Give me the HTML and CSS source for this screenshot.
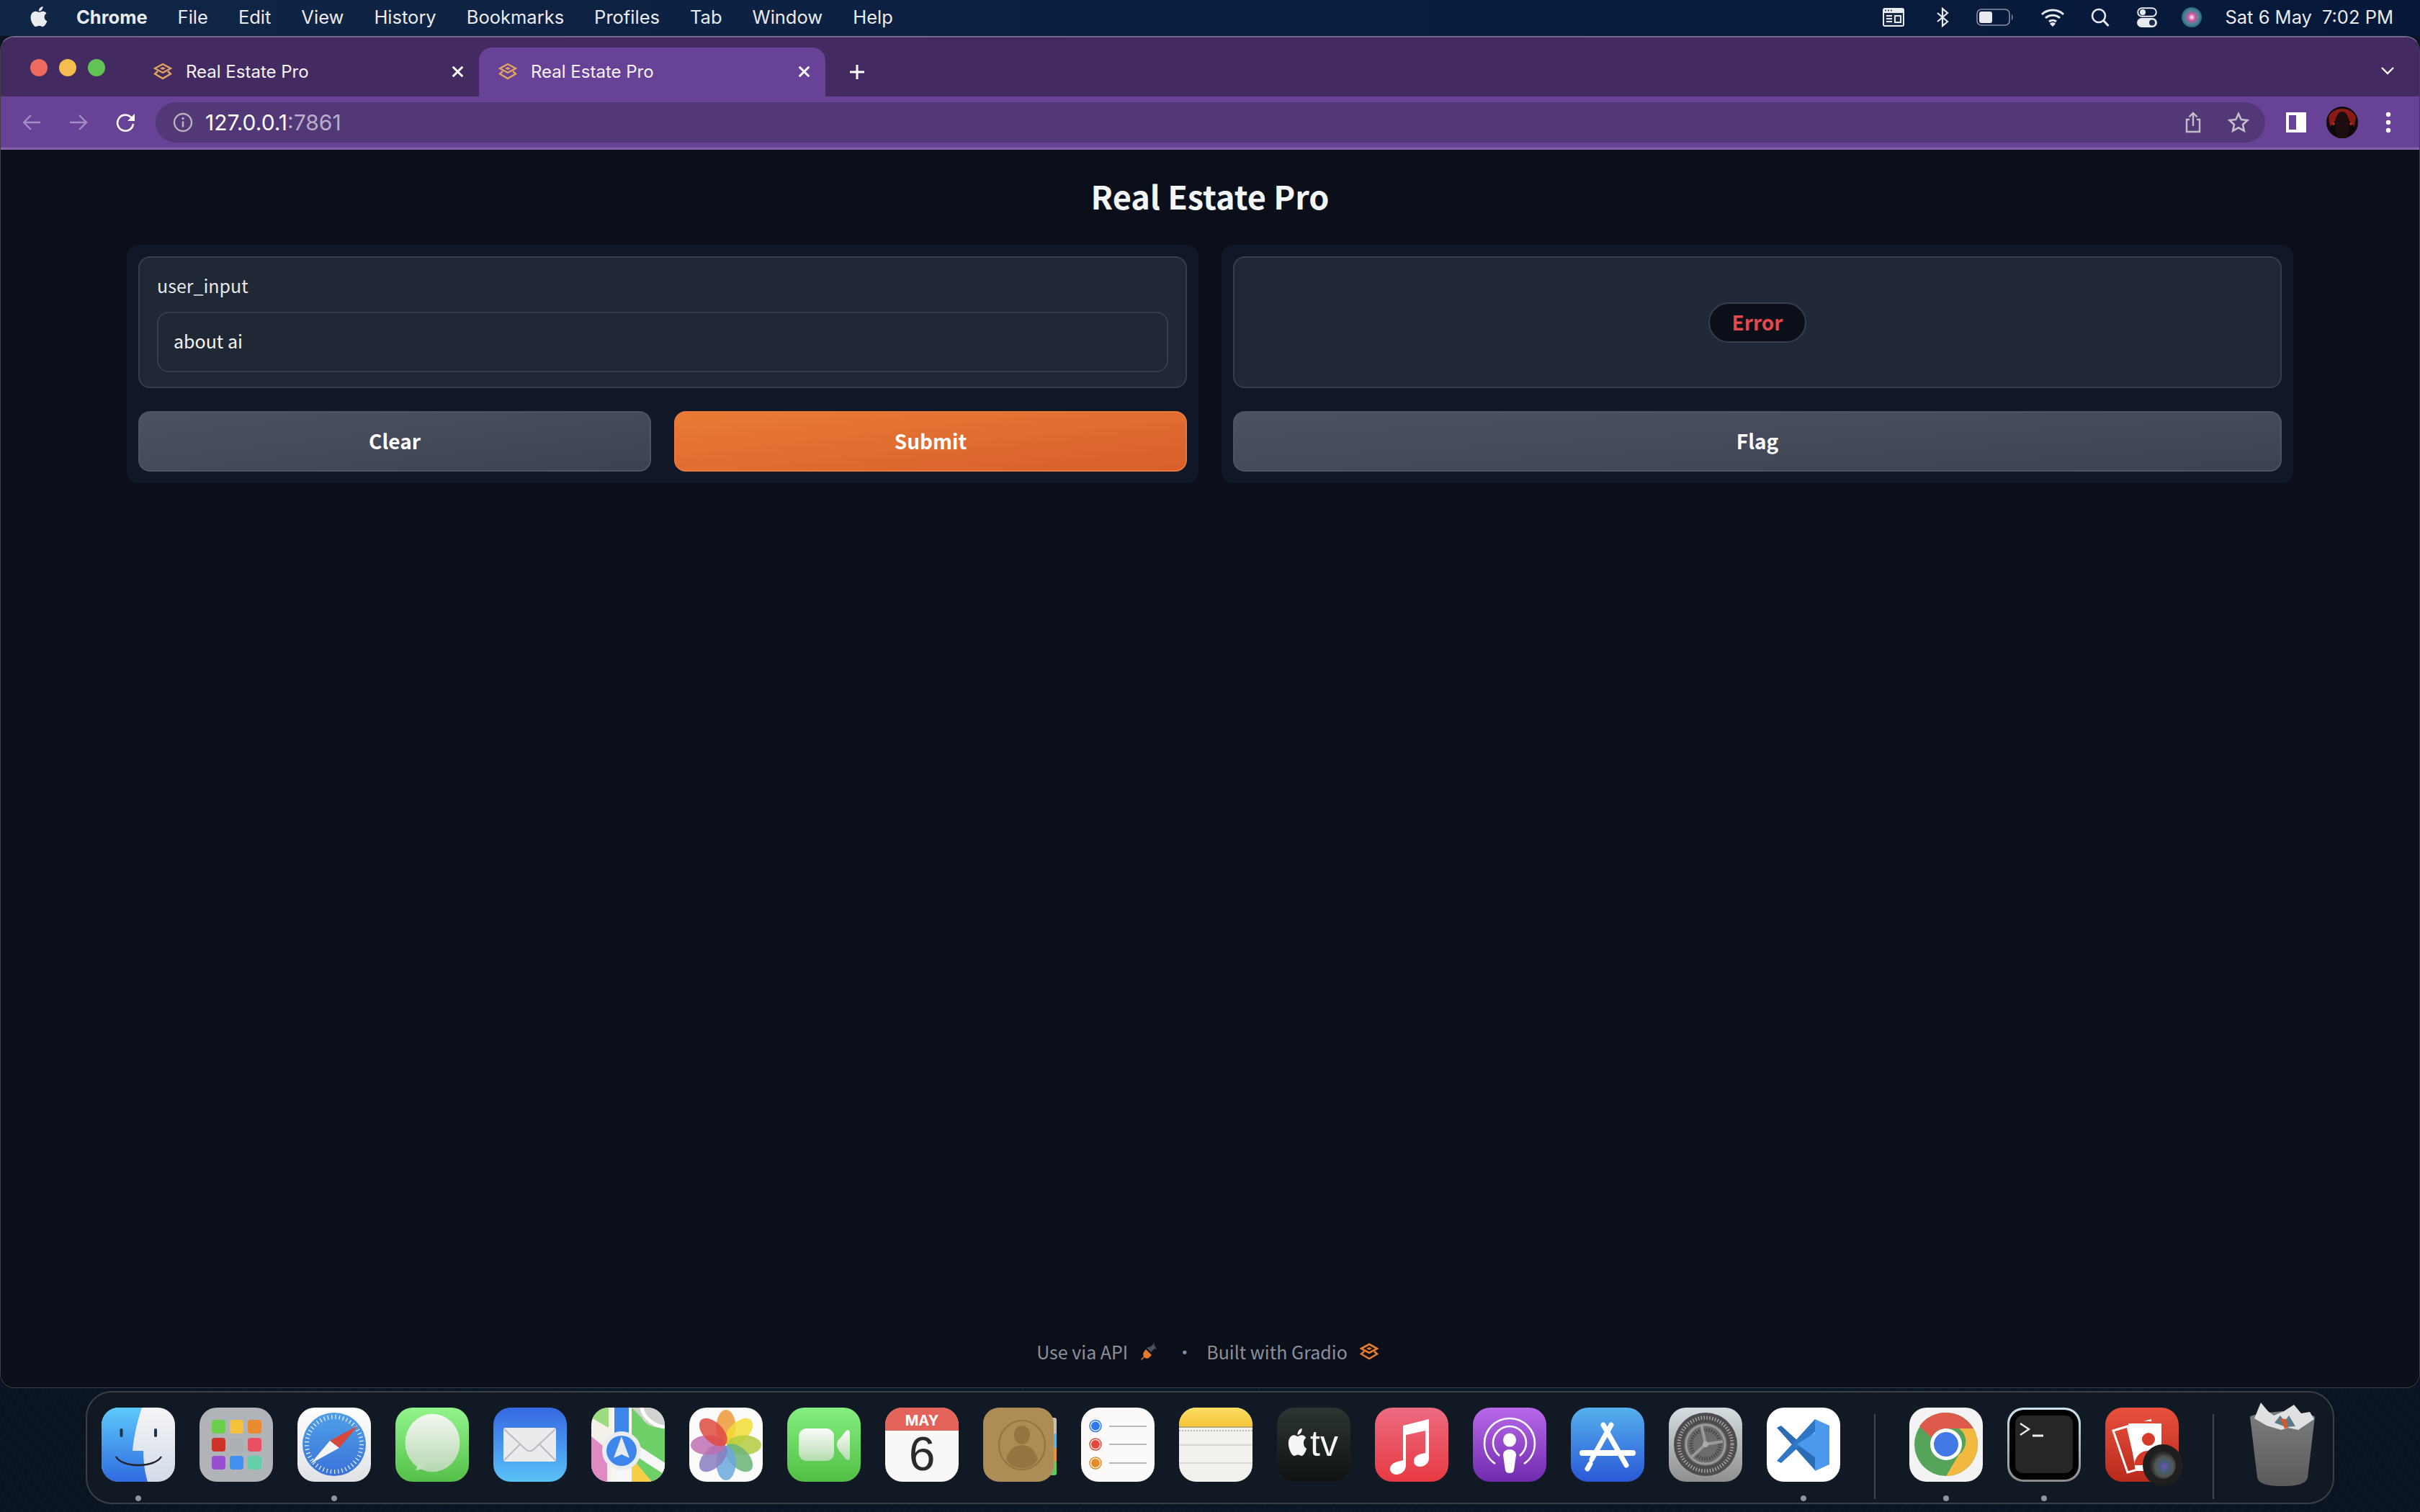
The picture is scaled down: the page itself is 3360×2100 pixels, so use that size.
FILE: index.html
```html
<!DOCTYPE html>
<html lang="en">
<head>
<meta charset="utf-8">
<title>Real Estate Pro</title>
<link rel="stylesheet" href="styles.css">
</head>
<body>
<header class="menubar">
  <svg class="apple" viewBox="0 0 24 24"><path d="M12.152 6.896c-.948 0-2.415-1.078-3.96-1.04-2.04.027-3.91 1.183-4.961 3.014-2.117 3.675-.546 9.103 1.519 12.09 1.013 1.454 2.208 3.09 3.792 3.039 1.52-.065 2.09-.987 3.935-.987 1.831 0 2.35.987 3.96.948 1.637-.026 2.676-1.48 3.676-2.948 1.156-1.688 1.636-3.325 1.662-3.415-.039-.013-3.182-1.221-3.22-4.857-.026-3.04 2.48-4.494 2.597-4.559-1.429-2.09-3.623-2.324-4.39-2.376-2-.156-3.675 1.09-4.61 1.09zM15.53 3.83c.843-1.012 1.4-2.427 1.245-3.83-1.207.052-2.662.805-3.532 1.818-.78.896-1.454 2.338-1.273 3.714 1.338.104 2.715-.688 3.559-1.701"/></svg>
  <nav class="menus">
    <span class="menu-app">Chrome</span><span>File</span><span>Edit</span><span>View</span><span>History</span><span>Bookmarks</span><span>Profiles</span><span>Tab</span><span>Window</span><span>Help</span>
  </nav>
  <div class="status">
    <svg class="st" width="30" height="26" viewBox="0 0 30 26"><rect x="0" y="0" width="30" height="26" rx="3" fill="#e8eaee"/><rect x="2" y="7" width="26" height="17" fill="#1a2a48"/><g fill="#1a2a48"><circle cx="4" cy="3.5" r="1"/><circle cx="8" cy="3.5" r="1"/><circle cx="12" cy="3.5" r="1"/></g><path d="M5 11h8M5 15h8M5 19h8" stroke="#e8eaee" stroke-width="2"/><path d="M17 11h8v9h-8z" fill="none" stroke="#e8eaee" stroke-width="2"/></svg>
    <svg class="st st-bt" width="18" height="28" viewBox="0 0 18 28"><path d="M2 8l14 12-7 6V2l7 6L2 20" fill="none" stroke="#e8eaee" stroke-width="2.2"/></svg>
    <svg class="st st-bat" width="52" height="24" viewBox="0 0 52 24"><rect x="1" y="1" width="45" height="22" rx="6" fill="none" stroke="#8b93a3" stroke-width="1.6"/><rect x="4" y="4" width="18" height="16" rx="3" fill="#e8eaee"/><path d="M49 8c2 1 2 7 0 8z" fill="#8b93a3"/></svg>
    <svg class="st st-wifi" width="34" height="26" viewBox="0 0 34 26"><path d="M2 9a22 22 0 0 1 30 0M7 14a15 15 0 0 1 20 0M12 19a8 8 0 0 1 10 0" fill="none" stroke="#e8eaee" stroke-width="3"/><path d="M17 26l-4-4a5 5 0 0 1 8 0z" fill="#e8eaee"/></svg>
    <svg class="st st-search" width="26" height="26" viewBox="0 0 26 26"><circle cx="11" cy="11" r="9" fill="none" stroke="#e8eaee" stroke-width="2.6"/><path d="M17.5 17.5l7 7.5" stroke="#e8eaee" stroke-width="3"/></svg>
    <svg class="st st-cc" width="28" height="28" viewBox="0 0 28 28"><rect x="1.2" y="1.2" width="25.6" height="11.6" rx="5.8" fill="none" stroke="#e8eaee" stroke-width="2"/><circle cx="8" cy="7" r="4" fill="#e8eaee"/><rect x="0" y="15" width="28" height="13" rx="6.5" fill="#e8eaee"/><circle cx="21" cy="21.500" r="4" fill="#1a2a48"/></svg>
    <svg class="st st-siri" width="28" height="28" viewBox="0 0 28 28"><defs><radialGradient id="siri" cx=".5" cy=".5" r=".6"><stop offset="0" stop-color="#f2f4f6"/><stop offset=".3" stop-color="#d0529a"/><stop offset=".6" stop-color="#3e8a9a"/><stop offset="1" stop-color="#30406a"/></radialGradient></defs><circle cx="14" cy="14" r="14" fill="url(#siri)"/></svg>
    <span class="clock"><span>Sat 6 May</span><span>7:02 PM</span></span>
  </div>
</header>

<div class="window">
  <div class="tabstrip">
    <div class="lights"><i class="light red"></i><i class="light yellow"></i><i class="light green"></i></div>
    <div class="tab">
      <svg class="favicon" viewBox="0 0 26 24"><path d="M13 2l11 6-11 6L2 8zM6 12l-4 3.500L13 22l11-6.500L20 12" fill="none" stroke="#e3a45d" stroke-width="2.400"/><path d="M13 6l4 2-4 2-4-2z" fill="#e3a45d"/></svg>
      <span class="tab-title">Real Estate Pro</span>
      <svg class="tab-x" viewBox="0 0 14 14"><path d="M2 2l10 10M12 2L2 12" stroke="#fff" stroke-width="2.2"/></svg>
    </div>
    <div class="tab tab-active">
      <svg class="favicon" viewBox="0 0 26 24"><path d="M13 2l11 6-11 6L2 8zM6 12l-4 3.500L13 22l11-6.500L20 12" fill="none" stroke="#e3a45d" stroke-width="2.400"/><path d="M13 6l4 2-4 2-4-2z" fill="#e3a45d"/></svg>
      <span class="tab-title">Real Estate Pro</span>
      <svg class="tab-x" viewBox="0 0 14 14"><path d="M2 2l10 10M12 2L2 12" stroke="#fff" stroke-width="2.2"/></svg>
    </div>
    <svg class="newtab" viewBox="0 0 24 24"><path d="M12 2v20M2 12h20" stroke="#fff" stroke-width="3"/></svg>
    <svg class="tabmenu" viewBox="0 0 20 12"><path d="M2 2l8 8 8-8" fill="none" stroke="#fff" stroke-width="2.4"/></svg>
  </div>
  <div class="toolbar">
    <svg class="nav" viewBox="0 0 28 28"><path d="M26 14H3M13 4L3 14l10 10" fill="none" stroke="#a68cc4" stroke-width="2.400"/></svg>
    <svg class="nav" viewBox="0 0 28 28"><path d="M2 14h23M15 4l10 10-10 10" fill="none" stroke="#a68cc4" stroke-width="2.400"/></svg>
    <svg class="nav" viewBox="0 0 28 28"><path d="M23.500 9A11 11 0 1 0 25 16" fill="none" stroke="#fff" stroke-width="2.600"/><path d="M27 2v10H17z" fill="#fff"/></svg>
    <div class="omnibox">
      <svg class="info" viewBox="0 0 28 28"><circle cx="14" cy="14" r="12" fill="none" stroke="#b7b3bd" stroke-width="2.400"/><path d="M14 12.500v8" stroke="#b7b3bd" stroke-width="2.600"/><circle cx="14" cy="8.500" r="1.700" fill="#b7b3bd"/></svg>
      <span class="url">127.0.0.1<span class="url-port">:7861</span></span>
      <svg class="share" viewBox="0 0 24 30"><path d="M7 11H3v17h18V11h-4M12 20V2M6.500 7.500L12 2l5.500 5.500" fill="none" stroke="#c3bfc9" stroke-width="2.400"/></svg>
      <svg class="star" viewBox="0 0 30 30"><path d="M15 3l3.700 8 8.800 1-6.500 6 1.800 8.700L15 22.300l-7.800 4.400L9 18l-6.500-6 8.800-1z" fill="none" stroke="#c3bfc9" stroke-width="2.600"/></svg>
    </div>
    <div class="sidepanel"></div>
    <svg class="avatar" viewBox="0 0 44 44"><circle cx="22" cy="22" r="22" fill="#0c0a0c"/><path d="M3 14C8 5 16 3 22 3s14 2 19 11l-2 14-7-8-3-8h-14l-3 8-7 8z" fill="#8c1a14"/><path d="M15 14a7 7 0 0 1 14 0l3 16-4 14H16l-4-14z" fill="#1d0d0f"/><circle cx="10" cy="24" r="2" fill="#b02a1e"/><circle cx="34" cy="24" r="2" fill="#b02a1e"/></svg>
    <svg class="kebab" viewBox="0 0 8 30"><circle cx="4" cy="4" r="3.200" fill="#fff"/><circle cx="4" cy="15" r="3.200" fill="#fff"/><circle cx="4" cy="26" r="3.200" fill="#fff"/></svg>
  </div>
  <main class="page">
    <h1 class="title">Real Estate Pro</h1>
    <div class="columns">
      <section class="panel">
        <div class="block block-input">
          <label class="label">user_input</label>
          <div class="textbox">about ai</div>
        </div>
        <div class="btn-row">
          <button class="btn btn-secondary">Clear</button>
          <button class="btn btn-primary">Submit</button>
        </div>
      </section>
      <section class="panel">
        <div class="block block-output"><span class="error-pill">Error</span></div>
        <div class="btn-row">
          <button class="btn btn-secondary">Flag</button>
        </div>
      </section>
    </div>
    <footer class="footer">
      <span>Use via API</span>
      <svg class="plug" viewBox="0 0 24 24"><path d="M14 5l3-3 1-2 1 1-1 2 3 3-1 1 2 1-1 1-2-1-5 5-6-6z" fill="#4a505e"/><path d="M7 9l8 8-4 4c-2 1-5 1-6-1l-4 4-1-1 4-4c-1-2-1-4 0-6z" fill="#e77b2d"/></svg>
      <span class="sep">·</span>
      <span>Built with Gradio</span>
      <svg class="gradio" viewBox="0 0 26 24"><path d="M13 2l11 6-11 6L2 8zM6 12l-4 3.500L13 22l11-6.500L20 12" fill="none" stroke="#e77b2d" stroke-width="2.600"/><path d="M13 6l4 2-4 2-4-2z" fill="#e77b2d"/></svg>
    </footer>
  </main>
</div>

<div class="dock-wrap">
<div class="dock">
  <!-- Finder -->
  <div class="app dot"><svg viewBox="0 0 102 103"><defs><linearGradient id="f1" x1="0" y1="0" x2="0" y2="1"><stop offset="0" stop-color="#5cc9fb"/><stop offset="1" stop-color="#2f6be0"/></linearGradient><linearGradient id="f2" x1="0" y1="0" x2="0" y2="1"><stop offset="0" stop-color="#f4f4f6"/><stop offset="1" stop-color="#d2dbe8"/></linearGradient></defs><rect width="102" height="103" rx="24" fill="url(#f2)"/><path d="M24 0h32C50 18 45 38 43 60h15c0 16 2 30 6 43H24A24 24 0 0 1 0 79V24A24 24 0 0 1 24 0z" fill="url(#f1)"/><rect x="25.500" y="29" width="4" height="12" rx="2" fill="#20304a"/><rect x="73" y="29" width="4" height="12" rx="2" fill="#20304a"/><path d="M20 68c8 16 54 16 63 0" fill="none" stroke="#22252c" stroke-width="2.500"/></svg></div>
  <!-- Launchpad -->
  <div class="app"><svg viewBox="0 0 102 103"><rect width="102" height="103" rx="24" fill="#b0b3b7"/><rect x="17" y="17" width="19" height="19" rx="4" fill="#6bd14d"/><rect x="42" y="17" width="19" height="19" rx="4" fill="#f5c13a"/><rect x="67" y="17" width="19" height="19" rx="4" fill="#e78b2e"/><rect x="17" y="42" width="19" height="19" rx="4" fill="#cb3527"/><rect x="42" y="42" width="19" height="19" rx="4" fill="#a9afb3"/><rect x="67" y="42" width="19" height="19" rx="4" fill="#ea5064"/><rect x="17" y="67" width="19" height="19" rx="4" fill="#994fd1"/><rect x="42" y="67" width="19" height="19" rx="4" fill="#3f92f0"/><rect x="67" y="67" width="19" height="19" rx="4" fill="#62cfa9"/></svg></div>
  <!-- Safari -->
  <div class="app dot"><svg viewBox="0 0 102 103"><defs><linearGradient id="s1" x1="0" y1="0" x2="0" y2="1"><stop offset="0" stop-color="#fff"/><stop offset="1" stop-color="#e1e2e5"/></linearGradient><linearGradient id="s2" x1="0" y1="0" x2="0" y2="1"><stop offset="0" stop-color="#4fa0e8"/><stop offset="1" stop-color="#3a72d8"/></linearGradient></defs><rect width="102" height="103" rx="24" fill="url(#s1)"/><circle cx="51" cy="51" r="44" fill="url(#s2)"/><circle cx="51" cy="51" r="38" fill="none" stroke="#e6f0fb" stroke-width="6" stroke-dasharray="1.300 4.000"/><path d="M84 25L58 56 45 46z" fill="#d9473a"/><path d="M18 78l27-32 13 10z" fill="#f4f4f4"/></svg></div>
  <!-- Messages -->
  <div class="app"><svg viewBox="0 0 102 103"><defs><linearGradient id="m1" x1="0" y1="0" x2="0" y2="1"><stop offset="0" stop-color="#92f58c"/><stop offset="1" stop-color="#55c049"/></linearGradient><linearGradient id="m2" x1="0" y1="0" x2="0" y2="1"><stop offset="0" stop-color="#f3f8f1"/><stop offset="1" stop-color="#b5d7b0"/></linearGradient></defs><rect width="102" height="103" rx="24" fill="url(#m1)"/><ellipse cx="51.500" cy="49" rx="38" ry="31" fill="url(#m2)" transform="translate(0 -14.700) scale(1 1.300)"/><path d="M32 74c0 6-2 10-4 13 5 0 12-3 16-8z" fill="#c4dfc0"/></svg></div>
  <!-- Mail -->
  <div class="app"><svg viewBox="0 0 102 103"><defs><linearGradient id="ma" x1="0" y1="0" x2="0" y2="1"><stop offset="0" stop-color="#3568e2"/><stop offset="1" stop-color="#5ac2f7"/></linearGradient></defs><rect width="102" height="103" rx="24" fill="url(#ma)"/><rect x="14" y="28" width="73" height="47" rx="3" fill="#ebebed"/><path d="M15 30l30 28c3 3 8 3 11 0l30-28M15 73l22-22M86 73L64 51" fill="none" stroke="#b9bcc2" stroke-width="2"/></svg></div>
  <!-- Maps -->
  <div class="app"><svg viewBox="0 0 102 103"><defs><clipPath id="mp"><rect width="102" height="103" rx="24"/></clipPath></defs><g clip-path="url(#mp)"><rect width="102" height="103" fill="#f4f1ea"/><path d="M0 0h24v28L0 14z" fill="#9ddc7e"/><path d="M0 40l22 18v45H0z" fill="#e08ac2"/><path d="M56 0h46v103H84L56 70z" fill="#6fd06a"/><path d="M56 0h46v26c-10 4-26 0-32-12z" fill="#d2d2d0"/><path d="M70 0c2 14 18 26 32 27" fill="none" stroke="#fff" stroke-width="5"/><path d="M56 70l28 33h-28z" fill="#f6cf46"/><rect x="28" y="0" width="28" height="103" fill="#f6f6f6"/><rect x="32" y="0" width="20" height="60" fill="#3f86ec"/><path d="M56 55l46 30" stroke="#f6f6f6" stroke-width="14"/><circle cx="42" cy="60" r="27" fill="#e9edf2"/><circle cx="42" cy="60" r="21" fill="#3e86ec"/><path d="M42 40l11 30-11-5-11 5z" fill="#e7ecf2"/></g></svg></div>
  <!-- Photos -->
  <div class="app"><svg viewBox="0 0 102 103"><rect width="102" height="103" rx="24" fill="#fbfbfb"/><g transform="translate(51 52)"><ellipse cx="0" cy="-25" rx="13.500" ry="24" fill="#ec9a38" opacity=".85"/><ellipse cx="0" cy="-25" rx="13.500" ry="24" fill="#f2dd38" opacity=".85" transform="rotate(45)"/><ellipse cx="0" cy="-25" rx="13.500" ry="24" fill="#b3cb40" opacity=".85" transform="rotate(90)"/><ellipse cx="0" cy="-25" rx="13.500" ry="24" fill="#69b478" opacity=".85" transform="rotate(135)"/><ellipse cx="0" cy="-25" rx="13.500" ry="24" fill="#6aa7dc" opacity=".85" transform="rotate(180)"/><ellipse cx="0" cy="-25" rx="13.500" ry="24" fill="#8a7cc0" opacity=".85" transform="rotate(225)"/><ellipse cx="0" cy="-25" rx="13.500" ry="24" fill="#be6fb0" opacity=".85" transform="rotate(270)"/><ellipse cx="0" cy="-25" rx="13.500" ry="24" fill="#df4a3e" opacity=".85" transform="rotate(315)"/></g></svg></div>
  <!-- FaceTime -->
  <div class="app"><svg viewBox="0 0 102 103"><defs><linearGradient id="ft" x1="0" y1="0" x2="0" y2="1"><stop offset="0" stop-color="#85ee80"/><stop offset="1" stop-color="#51bf44"/></linearGradient><linearGradient id="ft2" x1="0" y1="0" x2="0" y2="1"><stop offset="0" stop-color="#fbfdfa"/><stop offset="1" stop-color="#b5dcb0"/></linearGradient></defs><rect width="102" height="103" rx="24" fill="url(#ft)"/><rect x="16" y="29" width="49" height="45" rx="11" fill="url(#ft2)"/><path d="M69 51c0-4 2-6 4-8l8-10c3-3 6-2 6 2v34c0 4-3 5-6 2l-8-10c-2-3-4-5-4-10z" fill="url(#ft2)"/></svg></div>
  <!-- Calendar -->
  <div class="app"><svg viewBox="0 0 102 103"><defs><clipPath id="cal"><rect width="102" height="103" rx="24"/></clipPath></defs><g clip-path="url(#cal)"><rect width="102" height="103" fill="#f9f8f6"/><rect width="102" height="32" fill="#e3635a"/></g><text x="51" y="25" class="cal-month" text-anchor="middle">MAY</text><text x="51" y="87" class="cal-day" text-anchor="middle">6</text></svg></div>
  <!-- Contacts -->
  <div class="app"><svg viewBox="0 0 102 103"><rect x="92" y="14" width="10" height="25" rx="3" fill="#c4c1bc"/><rect x="92" y="36" width="10" height="22" fill="#5fb3e8"/><rect x="92" y="56" width="10" height="20" fill="#ea9330"/><rect x="92" y="74" width="10" height="20" rx="3" fill="#62c860"/><rect x="0" y="0" width="98" height="103" rx="22" fill="#ad8c55"/><ellipse cx="54" cy="52" rx="32" ry="34" fill="none" stroke="#95743f" stroke-width="2.200"/><ellipse cx="54" cy="38" rx="11" ry="13" fill="#95743f"/><path d="M32 72c3-14 13-20 22-20s19 6 22 20c-6 9-14 12-22 12s-16-3-22-12z" fill="#95743f"/></svg></div>
  <!-- Reminders -->
  <div class="app"><svg viewBox="0 0 102 103"><rect width="102" height="103" rx="24" fill="#fbfaf9"/><g fill="none" stroke-width="1.500"><circle cx="20" cy="25.500" r="8" stroke="#2f77ec"/><circle cx="20" cy="51" r="8" stroke="#e4483a"/><circle cx="20" cy="77" r="8" stroke="#e98a24"/></g><circle cx="20" cy="25.500" r="6" fill="#2f77ec"/><circle cx="20" cy="51" r="6" fill="#e4483a"/><circle cx="20" cy="77" r="6" fill="#e98a24"/><path d="M39 26h52M39 51h52M39 77h52" stroke="#b9b9b9" stroke-width="2"/></svg></div>
  <!-- Notes -->
  <div class="app"><svg viewBox="0 0 102 103"><defs><clipPath id="nt"><rect width="102" height="103" rx="24"/></clipPath><linearGradient id="nt2" x1="0" y1="0" x2="0" y2="1"><stop offset="0" stop-color="#fbdd63"/><stop offset="1" stop-color="#f6c437"/></linearGradient></defs><g clip-path="url(#nt)"><rect width="102" height="103" fill="#f3f1ec"/><rect width="102" height="26" fill="url(#nt2)"/><rect y="26" width="102" height="2" fill="#b9a772"/><path d="M0 32h102" stroke="#b7b5b0" stroke-width="2" stroke-dasharray="2 2"/><path d="M0 52h102M0 77h102" stroke="#d8d6d1" stroke-width="2"/></g></svg></div>
  <!-- TV -->
  <div class="app"><svg viewBox="0 0 102 103"><defs><linearGradient id="tv" x1="0" y1="0" x2="0" y2="1"><stop offset="0" stop-color="#2c3530"/><stop offset="1" stop-color="#0f1313"/></linearGradient></defs><rect width="102" height="103" rx="24" fill="url(#tv)"/><svg x="13" y="29" width="31" height="38" viewBox="0 0 24 24" preserveAspectRatio="none"><path fill="#f5f5f5" d="M12.152 6.896c-.948 0-2.415-1.078-3.96-1.04-2.04.027-3.91 1.183-4.961 3.014-2.117 3.675-.546 9.103 1.519 12.09 1.013 1.454 2.208 3.09 3.792 3.039 1.52-.065 2.09-.987 3.935-.987 1.831 0 2.35.987 3.96.948 1.637-.026 2.676-1.48 3.676-2.948 1.156-1.688 1.636-3.325 1.662-3.415-.039-.013-3.182-1.221-3.22-4.857-.026-3.04 2.48-4.494 2.597-4.559-1.429-2.09-3.623-2.324-4.39-2.376-2-.156-3.675 1.09-4.61 1.09zM15.530 3.830c.843-1.012 1.400-2.427 1.245-3.830-1.207.052-2.662.805-3.532 1.818-.780.896-1.454 2.338-1.273 3.714 1.338.104 2.715-.688 3.559-1.701"/></svg><text x="46" y="67" class="tv-text">tv</text></svg></div>
  <!-- Music -->
  <div class="app"><svg viewBox="0 0 102 103"><defs><linearGradient id="mu" x1="0" y1="0" x2="0" y2="1"><stop offset="0" stop-color="#ec6b80"/><stop offset="1" stop-color="#e73a42"/></linearGradient></defs><rect width="102" height="103" rx="24" fill="url(#mu)"/><path d="M39 25l36-9v54c0 8-7 12-12 12-6 0-9-3-9-8 0-6 6-9 11-10l5-1V32l-27 6v42c0 8-7 13-13 13-6 0-9-4-9-8 0-6 6-9 11-10l7-2z" fill="#fff"/></svg></div>
  <!-- Podcasts -->
  <div class="app"><svg viewBox="0 0 102 103"><defs><linearGradient id="po" x1="0" y1="0" x2="0" y2="1"><stop offset="0" stop-color="#b968ea"/><stop offset="1" stop-color="#6f2bae"/></linearGradient></defs><rect width="102" height="103" rx="24" fill="url(#po)"/><path d="M31 78C19 70 16 58 16 50c0-20 16-35 35-35s35 15 35 35c0 8-3 20-15 28" fill="none" stroke="#fff" stroke-width="2.600"/><path d="M37 67c-6-5-9-11-9-18 0-12 10-23 23-23s23 11 23 23c0 7-3 13-9 18" fill="none" stroke="#fff" stroke-width="2.600"/><ellipse cx="51" cy="45" rx="9" ry="9.500" fill="#fff"/><path d="M42 66c0-5 4-8 9-8s9 3 9 8l-3 21c-1 3-3 4-6 4s-5-1-6-4z" fill="#fff"/></svg></div>
  <!-- App Store -->
  <div class="app"><svg viewBox="0 0 102 103"><defs><linearGradient id="as" x1="0" y1="0" x2="0" y2="1"><stop offset="0" stop-color="#55b0ee"/><stop offset="1" stop-color="#2a58d6"/></linearGradient></defs><rect width="102" height="103" rx="24" fill="url(#as)"/><g stroke="#fff" stroke-linecap="round" fill="none"><path d="M16 63h70" stroke-width="8"/><path d="M56 24L29 72M45 24l32 56M27 78l-4 7" stroke-width="7"/></g></svg></div>
  <!-- Settings -->
  <div class="app"><svg viewBox="0 0 102 103"><defs><linearGradient id="se" x1="0" y1="0" x2="0" y2="1"><stop offset="0" stop-color="#d5dde0"/><stop offset="1" stop-color="#8f8f8f"/></linearGradient></defs><rect width="102" height="103" rx="24" fill="url(#se)"/><circle cx="51" cy="51" r="44" fill="#4d4d4f"/><circle cx="51" cy="51" r="37" fill="none" stroke="#a6a6a8" stroke-width="5" stroke-dasharray="1.500 2.400"/><circle cx="51" cy="51" r="30" fill="#6c6c6e"/><circle cx="51" cy="51" r="27" fill="none" stroke="#9a9a9c" stroke-width="3"/><circle cx="51" cy="51" r="20" fill="none" stroke="#444" stroke-width="5" stroke-dasharray="1.500 2"/><path d="M51 51V24M51 51l-24 14M51 51l24 1" stroke="#9a9a9c" stroke-width="4" transform="rotate(-12 51 51)"/><circle cx="51" cy="51" r="4" fill="#ababad"/></svg></div>
  <!-- VS Code -->
  <div class="app dot"><svg viewBox="0 0 102 103"><rect width="102" height="103" rx="24" fill="#fff"/><path d="M14 28l6-3 47 43v19z" fill="#2c6cb5"/><path d="M14 74l6 3 47-43V16z" fill="#2f77c4"/><path d="M67 16l20 9v54l-20 9zM67 35L42 51l25 18z" fill-rule="evenodd" fill="#4a99ec"/></svg></div>
  <i class="divider"></i>
  <!-- Chrome -->
  <div class="app dot"><svg viewBox="0 0 102 103"><rect width="102" height="103" rx="24" fill="#f3f3f3"/><circle cx="51" cy="51" r="44" fill="#56a45a"/><path d="M51 7a44 44 0 0 1 38 22H51a22 22 0 0 0-20 13L14 26A44 44 0 0 1 51 7z" fill="#dd5a4b"/><path d="M89 29a44 44 0 0 1-38 66l18-30a22 22 0 0 0 0-36z" fill="#f2b940"/><circle cx="51" cy="51" r="22" fill="#fff"/><circle cx="51" cy="51" r="17" fill="#4379e6"/></svg></div>
  <!-- Terminal -->
  <div class="app dot"><svg viewBox="0 0 102 103"><defs><linearGradient id="te" x1="0" y1="0" x2="0" y2="1"><stop offset="0" stop-color="#c8e4f0"/><stop offset="1" stop-color="#8a8a8a"/></linearGradient></defs><rect width="102" height="103" rx="22" fill="url(#te)"/><rect x="3" y="3" width="96" height="97" rx="20" fill="#000"/><rect x="11" y="11" width="80" height="80" rx="10" fill="#262626"/><path d="M18 22l12 8-12 8" fill="none" stroke="#eee" stroke-width="2.400"/><path d="M35 39h15" stroke="#eee" stroke-width="3"/></svg></div>
  <!-- Photo Booth -->
  <div class="app app-booth"><svg viewBox="0 0 110 110"><defs><linearGradient id="pb" x1="0" y1="0" x2="0" y2="1"><stop offset="0" stop-color="#e8503e"/><stop offset="1" stop-color="#b82a1a"/></linearGradient><radialGradient id="pbl" cx=".55" cy=".55" r=".5"><stop offset="0" stop-color="#7a4fc0"/><stop offset=".4" stop-color="#3f5f70"/><stop offset=".7" stop-color="#555"/><stop offset="1" stop-color="#2c2c2c"/></radialGradient></defs><rect width="102" height="103" rx="24" fill="url(#pb)"/><path d="M11 32l20-6 14 60-14 4z" fill="none" stroke="#fff" stroke-width="3"/><path d="M32 22h46v66H42z" fill="#fff"/><path d="M53 19l11-3v3z" fill="#fff"/><circle cx="60" cy="44" r="9" fill="#d63a28"/><path d="M40 80c2-14 10-20 20-20s16 8 18 20z" fill="#d63a28"/><ellipse cx="80" cy="80" rx="28" ry="29" fill="#1f1f1f"/><ellipse cx="80" cy="80" rx="18" ry="19" fill="url(#pbl)"/></svg></div>
  <i class="divider"></i>
  <!-- Trash -->
  <div class="trash"><svg viewBox="0 0 92 118"><defs><linearGradient id="tr" x1="0" y1="0" x2="0" y2="1"><stop offset="0" stop-color="#7b7c7e"/><stop offset="1" stop-color="#5b5b5d"/></linearGradient></defs><path d="M1 22c0-4 44-8 45-8s45 4 45 8l-10 84c-2 9-14 12-35 12s-33-3-35-12z" fill="url(#tr)"/><path d="M7 24L16 2l10 12 8 6 14-6 14-9 10 12 12-2 6 10-22 15-14-3-10 3-20-6z" fill="#dfe0e2"/><path d="M35 30l8-10 6 8 6-8 9 15-13 1z" fill="#5a7a88"/><path d="M43 24l6 14 5-1-3-12z" fill="#d05a30"/></svg></div>
</div>
</div>
</body>
</html>
```

FILE: styles.css
```css
* { box-sizing: border-box; }
html, body { margin: 0; padding: 0; }
body {
  width: 3360px;
  height: 2100px;
  overflow: hidden;
  display: flex;
  flex-direction: column;
  font-family: "Inter", "Liberation Sans", sans-serif;
  background:
    repeating-linear-gradient(115deg, rgba(60, 90, 120, .035) 0 3px, transparent 3px 11px),
    linear-gradient(90deg, #0a1420, #0b1724 50%, #0a1420);
  color: #fff;
}

/* macOS menu bar */
.menubar {
  height: 50px;
  flex: none;
  display: flex;
  align-items: center;
  padding-left: 40px;
  padding-right: 37px;
  padding-bottom: 3px;
  font-size: 25.500px;
  color: #e9ebef;
  background: linear-gradient(90deg, #102647, #05183a);
}
.apple { width: 28px; height: 32px; fill: #e9ebef; margin-right: 38px; margin-top: -2px; }
.menus { display: flex; gap: 42px; }
.menu-app { font-weight: 700; }
.status { margin-left: auto; display: flex; align-items: center; }
.st { flex: none; margin-left: 44px; }
.st-bt { margin-left: 44px; }
.st-bat { margin-left: 38px; }
.st-wifi { margin-left: 37px; }
.st-search { margin-left: 36px; }
.st-cc { margin-left: 38px; }
.st-siri { margin-left: 34px; }
.clock { margin-left: 32px; display: flex; gap: 14px; font-size: 25.500px; }

/* browser window */
.window {
  flex: none;
  height: 1878px;
  display: flex;
  flex-direction: column;
  border-radius: 20px;
  overflow: hidden;
  border: 1px solid #3f3f46;
  border-top: 2px solid #7a6590;
  background: #0b0f19;
}
.tabstrip {
  height: 82px;
  flex: none;
  display: flex;
  align-items: flex-end;
  background: #432b62;
}
.lights { display: flex; gap: 16px; margin-left: 41px; align-self: center; width: 120px; margin-top: 2px; }
.light { width: 24px; height: 24px; border-radius: 50%; display: block; }
.red { background: #ee6a5f; }
.yellow { background: #f5bd4f; }
.green { background: #61c454; }
.tab {
  width: 503px;
  height: 68px;
  padding-left: 51px;
  padding-right: 20px;
  padding-bottom: 2px;
  display: flex;
  align-items: center;
  font-size: 24px;
  border-radius: 18px 18px 0 0;
}
.tab-active { background: #674296; padding-left: 27px; width: 481px; }
.favicon { width: 26px; height: 24px; flex: none; margin-right: 19px; }
.tab-title { flex: 1; color: #f6f3f9; }
.tab-x { width: 19px; height: 19px; flex: none; }
.newtab { width: 24px; height: 24px; margin-left: 32px; align-self: center; margin-top: 13px; }
.tabmenu { width: 20px; height: 12px; margin-left: auto; margin-right: 34px; align-self: center; margin-top: 10px; }
.toolbar {
  height: 74px;
  flex: none;
  display: flex;
  align-items: center;
  padding: 1px 0 0 29px;
  background: #674296;
  border-bottom: 3px solid #8561a9;
}
.nav { width: 28px; height: 28px; flex: none; margin-right: 37px; }
.omnibox {
  width: 2929px;
  margin-left: -9px;
  margin-right: 29px;
  height: 56px;
  flex: none;
  display: flex;
  align-items: center;
  padding: 0 22px 0 24px;
  border-radius: 28px;
  background: #533878;
}
.info { width: 28px; height: 28px; flex: none; margin-right: 17px; }
.url { font-size: 30px; color: #fff; }
.url-port { color: #b9aec9; }
.share { width: 24px; height: 30px; margin-left: auto; margin-right: 36px; flex: none; }
.star { width: 30px; height: 30px; flex: none; }
.sidepanel { width: 28px; height: 28px; border: solid #fff; border-width: 4px 14px 4px 4px; flex: none; margin-right: 28px; }
.avatar { width: 44px; height: 44px; flex: none; margin-right: 38px; }
.kebab { width: 8px; height: 30px; flex: none; }

/* gradio page */
.page {
  flex: 1;
  display: flex;
  flex-direction: column;
  font-family: "Noto Sans CJK SC", "Noto Sans", sans-serif;
  background: #0b0f19;
}
.title {
  margin: 0;
  padding-top: 34px;
  height: 132px;
  line-height: 60px;
  font-size: 45px;
  font-weight: 700;
  text-align: center;
  color: #f4f5f7;
}
.columns {
  display: grid;
  grid-template-columns: 1fr 1fr;
  gap: 32px;
  padding: 0 175px;
}
.panel {
  height: 331px;
  padding: 16px;
  display: flex;
  flex-direction: column;
  gap: 32px;
  border-radius: 16px;
  background: #101726;
}
.block {
  height: 183px;
  flex: none;
  border: 2px solid #373d4b;
  border-radius: 16px;
  background: #212835;
}
.block-input { padding: 18px 24px; }
.label { display: block; font-size: 25px; line-height: 40px; color: #e6e7ea; margin-bottom: 17px; }
.textbox {
  height: 84px;
  padding: 0 21px 4px;
  display: flex;
  align-items: center;
  font-size: 25px;
  color: #f4f5f7;
  border: 2px solid #373d4b;
  border-radius: 16px;
  background: #212835;
}
.block-output { display: flex; align-items: center; justify-content: center; }
.error-pill {
  width: 136px;
  height: 56px;
  display: flex;
  align-items: center;
  justify-content: center;
  padding-bottom: 2px;
  font-size: 28px;
  font-weight: 700;
  color: #e5484d;
  border: 2px solid #373d4b;
  border-radius: 28px;
  background: #0b0f19;
}
.btn-row { display: flex; gap: 32px; }
.btn {
  flex: 1;
  height: 84px;
  border-radius: 16px;
  font-family: inherit;
  font-size: 28px;
  font-weight: 700;
  color: #fff;
  padding: 0 0 3px;
}
.btn-secondary { border: 2px solid #4d5361; background: linear-gradient(to bottom right, #4c5262, #3d4251); }
.btn-primary { border: 2px solid #e8793a; background: linear-gradient(to bottom right, #e97b36, #d85f2b); }
.footer {
  margin-top: auto;
  padding-bottom: 30px;
  padding-right: 7px;
  display: flex;
  align-items: center;
  justify-content: center;
  font-size: 25px;
  line-height: 40px;
  color: #8b909c;
}
.plug { width: 24px; height: 24px; margin-left: 18px; }
.sep { margin: 0 18px 0 24px; }
.gradio { width: 26px; height: 24px; margin-left: 17px; }

/* dock */
.dock-wrap { flex: 1; display: flex; justify-content: center; padding-top: 4px; align-items: flex-start; }
.dock {
  width: 3122px;
  margin-left: -1px;
  height: 157px;
  flex: none;
  display: flex;
  align-items: flex-start;
  gap: 34px;
  padding: 21px 0 0 20px;
  border: 2px solid #3a4048;
  border-radius: 36px;
  background: #111a24;
}
.app { width: 102px; height: 103px; flex: none; position: relative; }
.app > svg { width: 102px; height: 103px; display: block; }
.app.dot::after {
  content: "";
  position: absolute;
  left: 47px;
  top: 122px;
  width: 8px;
  height: 8px;
  border-radius: 50%;
  background: #8c949e;
}
.app-booth > svg { width: 110px; height: 110px; }
.divider { width: 2px; height: 118px; flex: none; margin: 9px 13px 0; background: #3f464e; display: block; }
.trash { width: 92px; height: 118px; flex: none; margin-top: -9px; margin-left: 2px; }
.trash svg { width: 92px; height: 118px; display: block; }
.cal-month { font-family: "Inter", sans-serif; font-size: 20px; font-weight: 700; fill: #fff; }
.cal-day { font-family: "Liberation Sans", sans-serif; font-size: 66px; fill: #2a2a2a; }
.tv-text { font-family: "Liberation Sans", sans-serif; font-size: 50px; fill: #f5f5f5; }
```
